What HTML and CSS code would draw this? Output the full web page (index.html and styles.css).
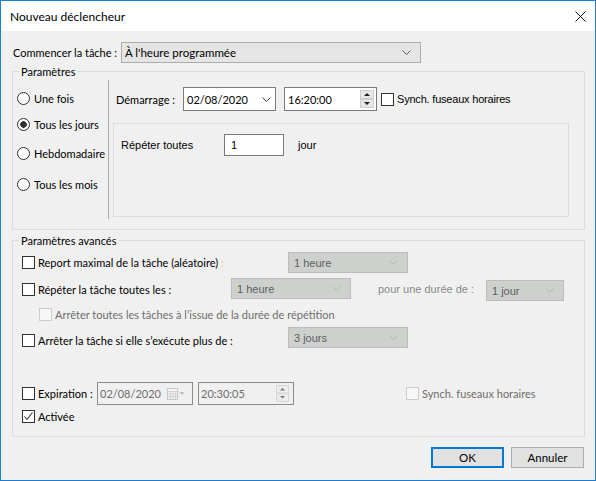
FILE: index.html
```html
<!DOCTYPE html>
<html lang="fr">
<head>
<meta charset="utf-8">
<title>Nouveau déclencheur</title>
<link rel="stylesheet" href="styles.css">
</head>
<body>
<div class="win">
  <div class="titlebar">
    <span class="title">Nouveau déclencheur</span>
    <svg class="close" width="11" height="11" viewBox="0 0 11 11"><path d="M0.5 0.5L10.5 10.5M10.5 0.5L0.5 10.5" stroke="#111" stroke-width="1" fill="none"/></svg>
  </div>
  <div class="content">
    <div class="row-start">
      <span class="lbl-start">Commencer la tâche :</span>
      <div class="combo combo-main">
        <span class="combo-text">À l'heure programmée</span>
        <svg class="chev" width="9" height="5" viewBox="0 0 9 5"><path d="M0.5 0.5L4.5 4.5L8.5 0.5" stroke="#555" fill="none"/></svg>
      </div>
    </div>

    <fieldset class="group group-params">
      <legend>Paramètres</legend>
      <div class="params">
        <div class="radios">
          <div class="radio r1"><span class="rb"></span><span>Une fois</span></div>
          <div class="radio r2"><span class="rb on"></span><span>Tous les jours</span></div>
          <div class="radio r3"><span class="rb"></span><span>Hebdomadaire</span></div>
          <div class="radio r4"><span class="rb"></span><span>Tous les mois</span></div>
        </div>
        <div class="vsep"></div>
        <div class="params-right">
          <div class="start-row">
            <span class="lbl-dem">Démarrage :</span>
            <div class="field date">
              <span class="dtext">02/08/2020</span>
              <svg class="chev dchev" width="9" height="5" viewBox="0 0 9 5"><path d="M0.5 0.5L4.5 4.5L8.5 0.5" stroke="#444" fill="none"/></svg>
            </div>
            <div class="field time">
              <span class="dtext">16:20:00</span>
              <svg class="spin" width="14" height="18" viewBox="0 0 14 18"><rect x="0.5" y="0.5" width="13" height="8" fill="#e6e6e6" stroke="#cfcfcf"/><rect x="0.5" y="9.5" width="13" height="8" fill="#e6e6e6" stroke="#cfcfcf"/><path d="M4 6H10L7 3Z" fill="#222"/><path d="M4 12H10L7 15Z" fill="#222"/></svg>
            </div>
            <span class="cb sync-cb"></span>
            <span class="ms cb-text sync-text">Synch. fuseaux horaires</span>
          </div>
          <div class="recur">
            <div class="recur-row">
              <span class="ms lbl-rep">Répéter toutes</span>
              <div class="field num ms">1</div>
              <span class="ms jour">jour</span>
            </div>
          </div>
        </div>
      </div>
    </fieldset>

    <fieldset class="group group-adv">
      <legend>Paramètres avancés</legend>
      <div class="adv">
        <div class="arow rowA">
          <div class="cbwrap w266"><span class="cb"></span><span class="cb-text">Report maximal de la tâche (aléatoire)<span class="colon"> :</span></span></div>
          <div class="combo dis w120"><span class="combo-text ms">1 heure</span><svg class="chev" width="9" height="5" viewBox="0 0 9 5"><path d="M0.5 0.5L4.5 4.5L8.5 0.5" stroke="#b4b8b4" fill="none"/></svg></div>
        </div>
        <div class="arow rowB">
          <div class="cbwrap w209"><span class="cb"></span><span class="cb-text">Répéter la tâche toutes les :</span></div>
          <div class="combo dis w120"><span class="combo-text ms">1 heure</span><svg class="chev" width="9" height="5" viewBox="0 0 9 5"><path d="M0.5 0.5L4.5 4.5L8.5 0.5" stroke="#b4b8b4" fill="none"/></svg></div>
          <span class="duree ms">pour une durée de :</span>
          <div class="combo dis w78 low"><span class="combo-text ms">1 jour</span><svg class="chev" width="9" height="5" viewBox="0 0 9 5"><path d="M0.5 0.5L4.5 4.5L8.5 0.5" stroke="#b4b8b4" fill="none"/></svg></div>
        </div>
        <div class="arow rowC">
          <span class="cb dis"></span><span class="cb-text gray">Arrêter toutes les tâches à l’issue de la durée de répétition</span>
        </div>
        <div class="arow rowD">
          <div class="cbwrap w266 lower"><span class="cb"></span><span class="cb-text">Arrêter la tâche si elle s’exécute plus de :</span></div>
          <div class="combo dis w120"><span class="combo-text ms">3 jours</span><svg class="chev" width="9" height="5" viewBox="0 0 9 5"><path d="M0.5 0.5L4.5 4.5L8.5 0.5" stroke="#b4b8b4" fill="none"/></svg></div>
        </div>
        <div class="arow rowE">
          <div class="cbwrap w75"><span class="cb"></span><span class="cb-text">Expiration :</span></div>
          <div class="field dfield w96">
            <span class="gray dtext">02/08/2020</span>
            <svg class="cal" width="20" height="12" viewBox="0 0 20 12"><rect x="0.5" y="0.5" width="10" height="11" fill="#f4f4f4" stroke="#c8c8c8"/><path d="M1 3.5H10M1 6H10M1 8.5H10M3.5 3V11M6 3V11M8.5 3V11" stroke="#d4d4d4"/><path d="M12 4H18L15 7Z" fill="#c4c4c4"/></svg>
          </div>
          <div class="field dfield w96 tfield">
            <span class="gray dtext">20:30:05</span>
            <svg class="spin" width="13" height="17" viewBox="0 0 13 17"><rect x="0.5" y="0.5" width="12" height="7.5" fill="#ececec" stroke="#d6d6d6"/><rect x="0.5" y="9" width="12" height="7.5" fill="#ececec" stroke="#d6d6d6"/><path d="M4 5.5H9L6.5 3Z" fill="#777"/><path d="M4 11H9L6.5 13.5Z" fill="#777"/></svg>
          </div>
          <span class="cb dis sync2"></span><span class="cb-text gray">Synch. fuseaux horaires</span>
        </div>
        <div class="arow rowF">
          <span class="cb"><svg width="11" height="11" viewBox="0 0 11 11"><path d="M1.5 5.5L4 8.5L9.5 1.5" stroke="#333" stroke-width="1.1" fill="none"/></svg></span><span class="cb-text">Activée</span>
        </div>
      </div>
    </fieldset>

    <div class="buttons">
      <button class="btn btn-ok">OK</button>
      <button class="btn">Annuler</button>
    </div>
  </div>
</div>
</body>
</html>
```

FILE: styles.css
```css
* { box-sizing: border-box; }

body {
  margin: 0;
  font-family: Lato, "Liberation Sans", sans-serif;
  font-size: 11px;
  color: #000;
  background: #fff;
  white-space: nowrap;
}

.win {
  width: 596px;
  height: 481px;
  border: 1px solid #1a7fd4;
  background: #f0f0f0;
  display: flex;
  flex-direction: column;
}

.titlebar {
  flex: none;
  height: 30px;
  background: #fff;
  display: flex;
  align-items: center;
  justify-content: space-between;
  padding: 0 9px 0 9px;
}
.title { font-size: 12px; }
.close { margin-top: 1px; }

.content {
  flex: 1;
  padding: 0 10px 0 11px;
  display: flex;
  flex-direction: column;
}

.ms { font-family: "Liberation Sans", Arial, sans-serif; font-size: 11px; }
.gray { color: #6d6d6d; }

/* first row */
.row-start {
  display: flex;
  align-items: center;
  height: 21px;
  margin-top: 11px;
}
.lbl-start { width: 109px; padding-left: 1px; flex: none; }

.combo {
  display: flex;
  align-items: center;
  height: 21px;
  flex: none;
  border: 1px solid #adadad;
  background: #e5e5e5;
  padding: 0 9px 0 3px;
}
.combo-main { width: 300px; font-size: 11.5px; }
.combo-text { flex: 1; white-space: nowrap; }
.combo.dis { background: #cdd0cd; border-color: #babdba; color: #5f5f5f; padding-left: 5px; }
.w120 { width: 120px; }
.w78 { width: 78px; }
.low { align-self: flex-start; margin-top: 2px; }

/* groups */
.group {
  margin: 0;
  padding: 0;
  border: 1px solid #dcdcdc;
  min-width: 0;
}
.group legend {
  margin-left: 6px;
  padding: 0 2px;
  line-height: 15px;
  height: 15px;
}
.group-params { margin-top: 1px; }
.group-adv { margin-top: 3px; }

.params {
  display: flex;
  height: 150px;
}
.radios {
  width: 95px;
  flex: none;
  display: flex;
  flex-direction: column;
}
.radio {
  display: flex;
  align-items: center;
  height: 16px;
  padding-left: 4px;
  gap: 4px;
}
.r1 { margin-top: 11px; }
.r2 { margin-top: 10px; }
.r3 { margin-top: 13px; }
.r4 { margin-top: 15px; }
.rb {
  width: 13px;
  height: 13px;
  flex: none;
  border: 1px solid #333;
  border-radius: 50%;
  background: #fff;
}
.rb.on { background: radial-gradient(circle, #333 0 3px, #fff 3.6px); }

.vsep {
  width: 1px;
  flex: none;
  height: 139px;
  margin-top: 1px;
  background: #a8a8a8;
}

.params-right { display: flex; flex-direction: column; }
.start-row {
  display: flex;
  align-items: center;
  margin-top: 8px;
  height: 24px;
  padding-left: 7px;
}
.lbl-dem { width: 67px; flex: none; }
.field {
  display: flex;
  align-items: center;
  flex: none;
  background: #fff;
  border: 1px solid #7a7a7a;
  padding-left: 3px;
}
.dtext { font-size: 11px; }
.date { width: 93px; height: 24px; }
.dchev { margin-left: auto; margin-right: 4px; }
.chev { flex: none; }
.time { width: 93px; height: 24px; margin-left: 8px; }
.time .spin { margin-left: auto; margin-right: 2px; }
.cb {
  width: 13px;
  height: 13px;
  flex: none;
  border: 1px solid #333;
  background: #fff;
  display: flex;
  align-items: center;
  justify-content: center;
}
.cb.dis { border-color: #cccccc; background: #f7f7f7; }
.cb-text { margin-left: 3px; white-space: nowrap; }
.sync-cb { margin-left: 4px; }
.sync-text { letter-spacing: -0.2px; }

.recur {
  margin-top: 12px;
  margin-left: 4px;
  width: 456px;
  height: 94px;
  border: 1px solid #dcdcdc;
}
.recur-row {
  display: flex;
  align-items: center;
  margin-top: 10px;
  height: 22px;
  padding-left: 7px;
}
.lbl-rep { width: 103px; flex: none; }
.num { width: 60px; height: 22px; padding-left: 6px; }
.jour { margin-left: 14px; }

/* advanced */
.adv {
  display: flex;
  flex-direction: column;
  height: 188px;
  padding-left: 9px;
}
.arow { display: flex; align-items: center; }
.cbwrap { display: flex; align-items: center; flex: none; }
.w266 { width: 266px; }
.w209 { width: 209px; }
.w75 { width: 75px; }
.lower { margin-top: 6px; }
.colon { color: #e6c27a; }
.rowA { margin-top: 4px; height: 21px; }
.rowB { margin-top: 5px; height: 21px; }
.rowB .cbwrap { margin-top: 1px; }
.duree { margin-left: 27px; width: 108px; flex: none; color: #8a8a8a; }
.rowC { margin-top: 7px; height: 16px; padding-left: 17px; }
.rowD { margin-top: 5px; height: 21px; }
.rowE { margin-top: 34px; height: 23px; }
.rowF { margin-top: 3px; height: 16px; }

.dfield { height: 23px; background: #f0f0f0; border-color: #8c8c8c; padding-left: 2px; }
.w96 { width: 96px; }
.cal { margin-left: auto; margin-right: 5px; }
.tfield { margin-left: 5px; }
.tfield .spin { margin-left: auto; margin-right: 4px; }
.sync2 { margin-left: 112px; }

/* buttons */
.buttons {
  display: flex;
  justify-content: flex-end;
  gap: 7px;
  margin-top: 10px;
  margin-right: 1px;
}
.btn {
  width: 73px;
  height: 21px;
  padding: 0;
  font-family: inherit;
  font-size: 11.5px;
  color: #000;
  background: #e1e1e1;
  border: 1px solid #adadad;
}
.btn-ok { border: 2px solid #0078d7; }
```
